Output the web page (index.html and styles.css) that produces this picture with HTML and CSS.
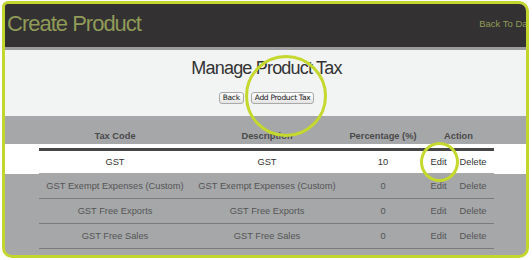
FILE: index.html
```html
<!DOCTYPE html>
<html lang="en">
<head>
<meta charset="utf-8">
<title>Create Product</title>
<link rel="stylesheet" href="styles.css">
</head>
<body>
<div class="frame">
  <header class="topbar">
    <h1 class="app-title">Create Product</h1>
    <a class="back-link">Back To Dashboard</a>
  </header>
  <section class="intro">
    <h2 class="page-title">Manage Product Tax</h2>
    <div class="actions">
      <button class="btn">Back</button>
      <button class="btn">Add Product Tax</button>
    </div>
  </section>
  <section class="table-head">
    <div class="grid head">
      <div class="cell">Tax Code</div>
      <div class="cell">Description</div>
      <div class="cell">Percentage (%)</div>
      <div class="cell">Action</div>
    </div>
  </section>
  <section class="focus">
    <div class="grid row first">
      <div class="cell">GST</div>
      <div class="cell">GST</div>
      <div class="cell">10</div>
      <div class="cell acts"><a class="lnk">Edit</a><a class="lnk">Delete</a></div>
    </div>
  </section>
  <section class="rows">
    <div class="grid row">
      <div class="cell">GST Exempt Expenses (Custom)</div>
      <div class="cell">GST Exempt Expenses (Custom)</div>
      <div class="cell">0</div>
      <div class="cell acts"><a class="lnk">Edit</a><a class="lnk">Delete</a></div>
    </div>
    <div class="grid row">
      <div class="cell">GST Free Exports</div>
      <div class="cell">GST Free Exports</div>
      <div class="cell">0</div>
      <div class="cell acts"><a class="lnk">Edit</a><a class="lnk">Delete</a></div>
    </div>
    <div class="grid row">
      <div class="cell">GST Free Sales</div>
      <div class="cell">GST Free Sales</div>
      <div class="cell">0</div>
      <div class="cell acts"><a class="lnk">Edit</a><a class="lnk">Delete</a></div>
    </div>
    <div class="grid row">
      <div class="cell">GST on Capital</div>
      <div class="cell">GST on Capital</div>
      <div class="cell">0</div>
      <div class="cell acts"><a class="lnk">Edit</a><a class="lnk">Delete</a></div>
    </div>
  </section>
</div>
<div class="spot spot-add"></div>
<div class="spot spot-edit"></div>
</body>
</html>
```
FILE: styles.css
```css
html, body {
  margin: 0;
  padding: 0;
}
body {
  position: relative;
  width: 532px;
  height: 260px;
  overflow: hidden;
  background: #ffffff;
  font-family: "Liberation Sans", Arial, sans-serif;
}
.frame {
  margin: 1px 0 0 2px;
  width: 527px;
  height: 257px;
  box-sizing: border-box;
  border: 3px solid #c2d62e;
  border-radius: 6px 10px 10px 10px;
  overflow: hidden;
  background: #a5a7a9;
  display: flex;
  flex-direction: column;
}
.topbar {
  flex: none;
  height: 46px;
  box-sizing: border-box;
  padding-top: 9px;
  background: #333132;
  border-bottom: 3px solid #9c9c9c;
  display: flex;
  align-items: flex-start;
  white-space: nowrap;
  overflow: hidden;
}
.app-title {
  margin: 0 0 0 2px;
  font-size: 22px;
  line-height: 22px;
  font-weight: normal;
  letter-spacing: -1px;
  color: #909b58;
}
.back-link {
  margin: 6px -36px 0 auto;
  flex: none;
  font-size: 9.5px;
  line-height: 9.5px;
  color: #909b58;
}
.intro {
  flex: none;
  height: 66px;
  box-sizing: border-box;
  padding: 9px 0 0 2px;
  background: #f2f3f3;
  text-align: center;
}
.page-title {
  margin: 0;
  font-size: 18px;
  line-height: 18px;
  font-weight: normal;
  letter-spacing: -0.8px;
  color: #333333;
}
.actions {
  margin-top: 15px;
  display: flex;
  justify-content: center;
  gap: 7px;
}
.btn {
  height: 12px;
  margin: 0;
  padding: 0 3px;
  box-sizing: border-box;
  font-family: "DejaVu Sans", sans-serif;
  font-size: 7.5px;
  line-height: 10px;
  letter-spacing: -0.3px;
  color: #222222;
  border: 1px solid #a9a9a9;
  border-radius: 3px;
  background: linear-gradient(#ffffff, #e4e4e4);
}
.table-head {
  flex: none;
  height: 28px;
  box-sizing: border-box;
  padding-left: 2px;
}
.grid {
  width: 455px;
  margin: 0 auto;
  display: grid;
  grid-template-columns: 152px 152px 80px 71px;
  font-size: 9.3px;
  line-height: 12px;
}
.cell {
  text-align: center;
  white-space: nowrap;
}
.head {
  padding-top: 14px;
  font-weight: bold;
  color: #4a4a4a;
}
.focus {
  flex: none;
  padding: 4px 0 0 2px;
  background: #ffffff;
}
.row {
  height: 25px;
  box-sizing: border-box;
  align-items: center;
  border-bottom: 1px solid #7b7b7b;
  color: #555555;
}
.row.first {
  height: 26px;
  border-top: 3px solid #464646;
  border-bottom-color: #a9a9a9;
  color: #333333;
}
.rows {
  flex: none;
  padding-left: 2px;
}
.acts {
  display: flex;
  justify-content: center;
  gap: 13px;
}
.lnk {
  color: inherit;
  text-decoration: none;
}
.spot {
  position: absolute;
  box-sizing: border-box;
  border: 3px solid #c4d82e;
  border-radius: 50%;
}
.spot-add {
  left: 245px;
  top: 55px;
  width: 82px;
  height: 82px;
}
.spot-edit {
  left: 420px;
  top: 142px;
  width: 39px;
  height: 40px;
}
```
